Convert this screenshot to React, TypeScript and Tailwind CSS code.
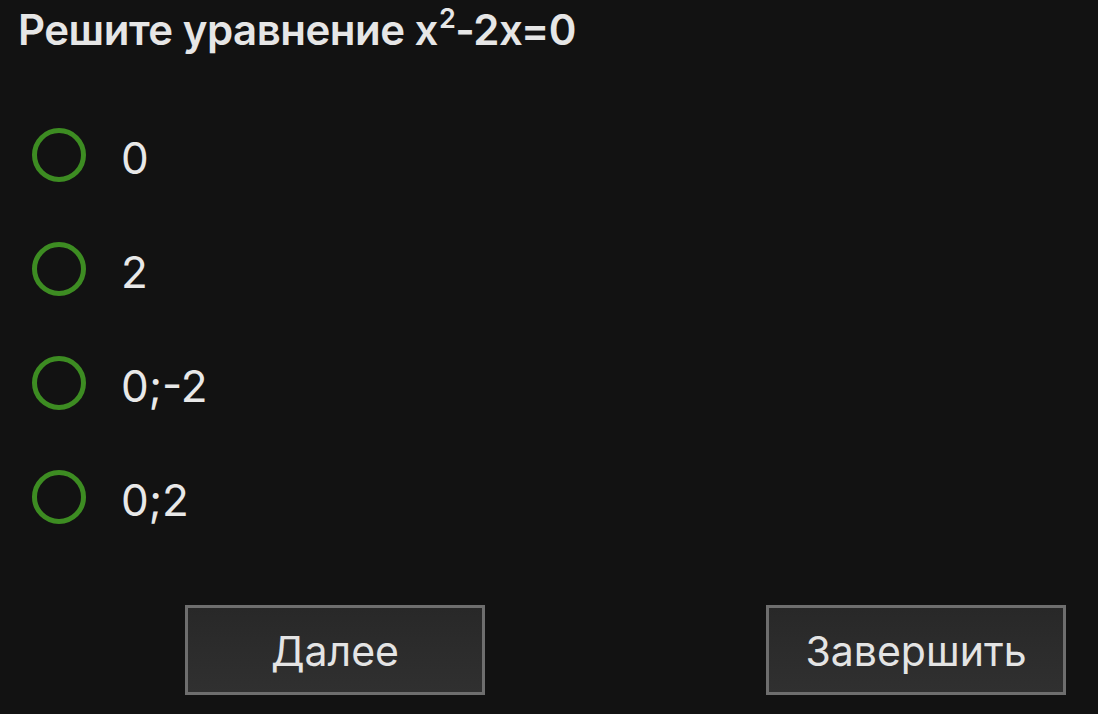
const options = ['0', '2', '0;-2', '0;2'];

function RadioRow({ label }: { label: string }) {
  return (
    <label className="flex h-[114px] items-center cursor-pointer">
      <span className="ml-[32px] h-[54px] w-[54px] shrink-0 rounded-full border-[5px] border-[#3d8c22]" />
      <span className="ml-[35px] pt-[6px] text-[44px] leading-none text-[#e8e8e8]">{label}</span>
    </label>
  );
}

export default function App() {
  return (
    <div
      className="flex h-[714px] w-[1098px] flex-col bg-[#121212]"
      style={{ fontFamily: 'Inter, "Noto Sans", sans-serif' }}
    >
      <h1 className="pl-[18px] pt-[6px] text-[42px] font-semibold leading-[48px] tracking-[-0.5px] text-[#e6e6e6]">
        Решите уравнение x<sup className="-top-[17px] ml-[1px] text-[27px]">2</sup>-2x=0
      </h1>

      <div className="mt-[44px] flex flex-col">
        {options.map((o) => (
          <RadioRow key={o} label={o} />
        ))}
      </div>

      <div className="mt-[51px] flex justify-between pl-[185px] pr-[32px]">
        <button className="h-[90px] w-[300px] border-[3px] border-[#6e6e6e] bg-gradient-to-b from-[#282828] to-[#303030] pt-[4px] text-[41px] text-[#e4e4e4]">
          Далее
        </button>
        <button className="h-[90px] w-[300px] border-[3px] border-[#6e6e6e] bg-gradient-to-b from-[#282828] to-[#303030] pt-[4px] text-[41px] text-[#e4e4e4]">
          Завершить
        </button>
      </div>
    </div>
  );
}
